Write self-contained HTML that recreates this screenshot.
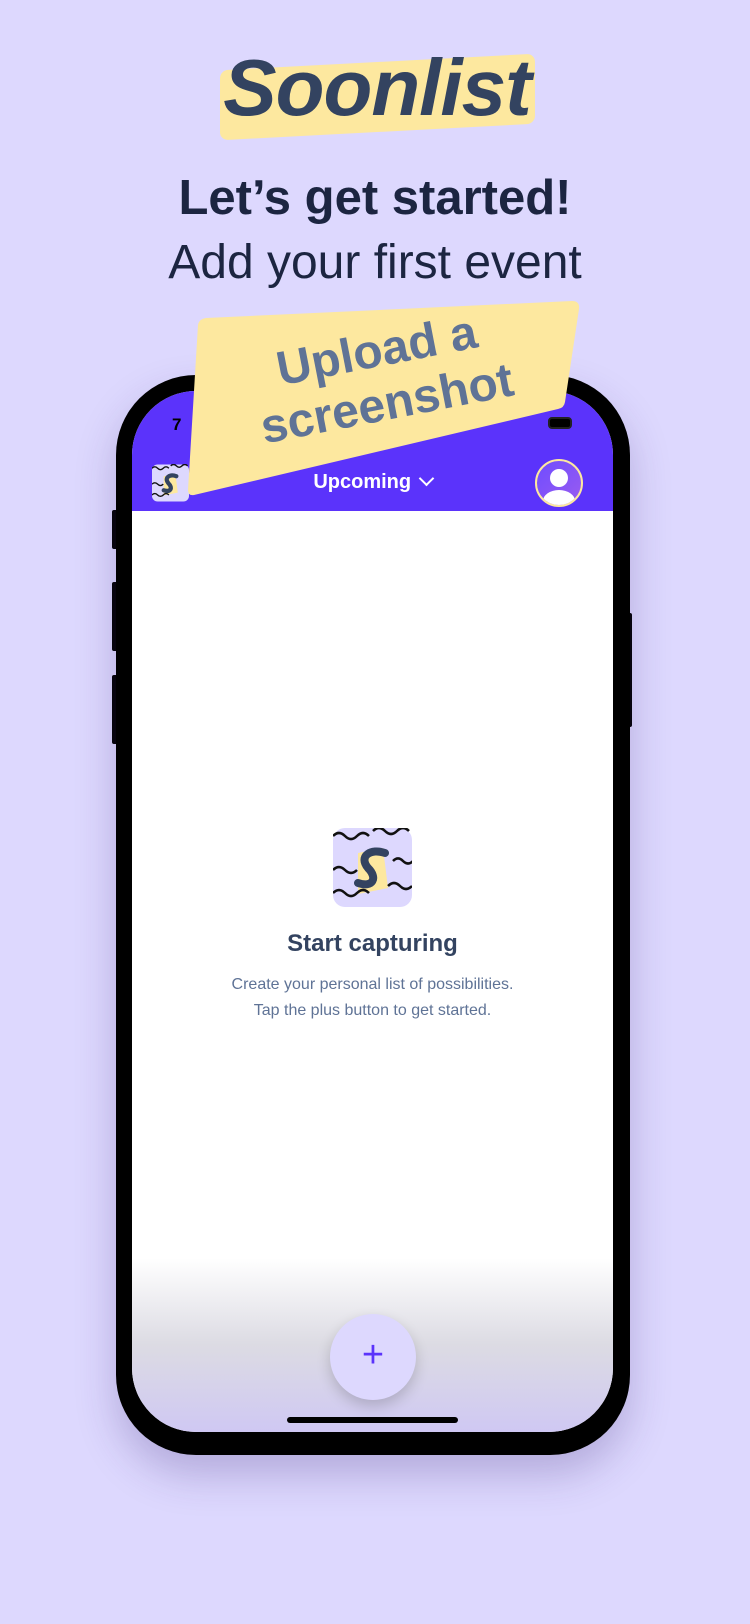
<!DOCTYPE html>
<html><head><meta charset="utf-8"><style>
*{margin:0;padding:0;box-sizing:border-box}
body{width:750px;height:1624px;background:#ddd8fe;position:relative;overflow:hidden;font-family:"Liberation Sans",sans-serif}
.abs{position:absolute}
</style></head><body>
<!-- logo -->
<div class="abs" style="left:220px;top:62px;width:315px;height:70px;background:#fde89f;border-radius:8px;transform:skewY(-3deg)"></div>
<div class="abs" style="left:212px;top:42px;width:330px;text-align:center;font:italic bold 80px 'Liberation Sans',sans-serif;color:#334360;letter-spacing:-1px">Soonlist</div>
<div class="abs" style="left:0;top:170px;width:750px;text-align:center;font-weight:bold;font-size:49px;color:#1c2541">Let’s get started!</div>
<div class="abs" style="left:0;top:235px;width:750px;text-align:center;font-size:48px;color:#1c2541">Add your first event</div>

<!-- phone -->
<div class="abs" style="left:112px;top:510px;width:6px;height:39px;background:#000;border-radius:2px"></div>
<div class="abs" style="left:112px;top:582px;width:6px;height:69px;background:#000;border-radius:2px"></div>
<div class="abs" style="left:112px;top:675px;width:6px;height:69px;background:#000;border-radius:2px"></div>
<div class="abs" style="left:626px;top:613px;width:6px;height:114px;background:#000;border-radius:2px"></div>
<div class="abs" style="left:116px;top:375px;width:514px;height:1080px;background:#000;border-radius:80px;box-shadow:0 20px 40px rgba(60,40,120,.25)"></div>
<div class="abs" style="left:132px;top:391px;width:481px;height:1041px;border-radius:64px;overflow:hidden;background:#fff">
  <div class="abs" style="left:0;top:0;width:481px;height:120px;background:#5b33fb"></div>
  <div class="abs" style="left:0;top:867px;width:481px;height:174px;background:linear-gradient(#fff,#dcdbe3 50%,#cfc8f3)"></div>
  <div class="abs" style="left:40px;top:24px;font-size:17px;font-weight:bold">7</div>
  <div class="abs" style="left:416px;top:26px;width:24px;height:12px;border:2px solid #222;border-radius:4px;background:#000"></div>
  <!-- header icon -->
  <svg class="abs" style="left:20px;top:73px" width="37" height="38" viewBox="0 0 79 79">
    <rect width="79" height="79" rx="12" fill="#ddd8fe"/>
    <path d="M25 25 L50 20 L55 60 L25 66Z" fill="#fde89f"/>
    <g stroke="#111" stroke-width="3" fill="none">
      <path d="M0 8 q6-6 12 0 t12 0 t12 0"/><path d="M40 3 q6-6 12 0 t12 0 t12 0"/>
      <path d="M0 42 q6-6 12 0 t12 0"/><path d="M0 65 q6-6 12 0 t12 0 t12 0"/>
    </g>
    <path d="M52 25 C38 20 25 28 35 40 C45 50 40 60 25 55" stroke="#334360" stroke-width="9" fill="none" stroke-linecap="round"/>
  </svg>
  <div class="abs" style="left:0;top:80px;width:481px;text-align:center;color:#fff;font-weight:bold;font-size:20px">Upcoming <span style="display:inline-block;width:11px;height:11px;border-right:2.5px solid #fff;border-bottom:2.5px solid #fff;transform:rotate(45deg);margin-left:4px;position:relative;top:-4px"></span></div>
  <div class="abs" style="left:403px;top:68px;width:48px;height:48px;border-radius:50%;background:linear-gradient(135deg,#6f4cff,#9a5cf0);border:2.5px solid #fde89f;overflow:hidden">
    <div class="abs" style="left:13px;top:8px;width:18px;height:18px;border-radius:50%;background:#fff"></div>
    <div class="abs" style="left:6px;top:29px;width:32px;height:22px;border-radius:50%;background:#fff"></div>
  </div>
  <!-- center icon -->
  <svg class="abs" style="left:201px;top:437px" width="79" height="79" viewBox="0 0 79 79">
    <rect width="79" height="79" rx="12" fill="#ddd8fe"/>
    <path d="M25 25 L50 20 L55 60 L25 66Z" fill="#fde89f"/>
    <g stroke="#111" stroke-width="2.5" fill="none">
      <path d="M0 8 q6-6 12 0 t12 0 t12 0"/><path d="M40 3 q6-6 12 0 t12 0 t12 0"/>
      <path d="M60 33 q5-5 10 0 t10 0"/><path d="M0 42 q6-6 12 0 t12 0"/>
      <path d="M55 58 q6-6 12 0 t12 0"/><path d="M0 65 q6-6 12 0 t12 0 t12 0"/>
    </g>
    <path d="M52 25 C38 20 25 28 35 40 C45 50 40 60 25 55" stroke="#334360" stroke-width="8" fill="none" stroke-linecap="round"/>
  </svg>
  <div class="abs" style="left:0;top:539px;width:481px;text-align:center;font-weight:bold;font-size:24px;color:#334360">Start capturing</div>
  <div class="abs" style="left:0;top:581px;width:481px;text-align:center;font-size:16px;color:#5f7396;line-height:26px">Create your personal list of possibilities.<br>Tap the plus button to get started.</div>
  <div class="abs" style="left:198px;top:923px;width:86px;height:86px;border-radius:50%;background:#ddd8fe;box-shadow:0 6px 14px rgba(0,0,0,.18);text-align:center;line-height:82px;font-size:38px;color:#5b33fb">+</div>
  <div class="abs" style="left:155px;top:1026px;width:171px;height:6px;border-radius:3px;background:#000"></div>
</div>
<!-- sticky note -->
<svg class="abs" style="left:0;top:0" width="750" height="520">
  <path d="M206 318 L572 301 Q580 301 579 309 L565 402 Q564 408 558 409 L194 495 Q188 496 188 490 L198 325 Q199 319 206 318Z" fill="#fde89f"/>
</svg>
<div class="abs" style="left:192px;top:324px;width:380px;text-align:center;transform:rotate(-11deg);font-weight:bold;font-size:48px;color:#5f7396;line-height:54px">Upload a<br>screenshot</div>
</body></html>
